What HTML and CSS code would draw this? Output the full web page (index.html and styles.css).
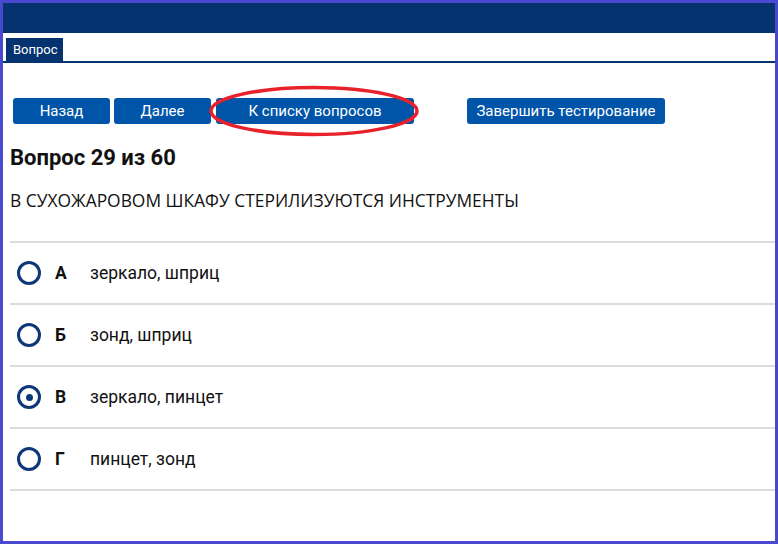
FILE: index.html
```html
<!DOCTYPE html>
<html lang="ru">
<head>
<meta charset="utf-8">
<title>Вопрос</title>
<link rel="stylesheet" href="styles.css">
</head>
<body>
<div class="frame">
  <div class="topbar"></div>
  <div class="tabs"><span class="tab">Вопрос</span></div>
  <div class="toolbar">
    <button class="btn btn-sm">Назад</button>
    <button class="btn btn-sm">Далее</button>
    <span class="marked">
      <button class="btn btn-lg">К списку вопросов</button>
      <svg class="ring" width="214" height="54" viewBox="0 0 214 54"><ellipse cx="107" cy="27" rx="103" ry="23.5" fill="none" stroke="#e8212b" stroke-width="3.5"/></svg>
    </span>
    <button class="btn btn-lg btn-finish">Завершить тестирование</button>
  </div>
  <h1 class="qtitle">Вопрос 29 из 60</h1>
  <p class="qtext">В СУХОЖАРОВОМ ШКАФУ СТЕРИЛИЗУЮТСЯ ИНСТРУМЕНТЫ</p>
  <ul class="answers">
    <li class="answer"><span class="radio"></span><span class="letter">А</span><span class="atext">зеркало, шприц</span></li>
    <li class="answer"><span class="radio"></span><span class="letter">Б</span><span class="atext">зонд, шприц</span></li>
    <li class="answer"><span class="radio checked"></span><span class="letter">В</span><span class="atext">зеркало, пинцет</span></li>
    <li class="answer"><span class="radio"></span><span class="letter">Г</span><span class="atext">пинцет, зонд</span></li>
  </ul>
</div>
</body>
</html>
```
FILE: styles.css
```css
* { box-sizing: border-box; }
html, body { margin: 0; padding: 0; background: #fff; }
body { font-family: Roboto, "Noto Sans", sans-serif; color: #111; }
.frame {
  width: 778px;
  height: 544px;
  border: 3px solid #4848d0;
  overflow: hidden;
}
.topbar { height: 30px; background: #05336f; }
.tabs {
  padding: 5px 0 0 3px;
  border-bottom: 2px solid #05336f;
  display: flex;
}
.tab {
  background: #05336f;
  color: #fff;
  font-size: 13px;
  line-height: 23px;
  padding: 0 5px 0 7px;
}
.toolbar {
  display: flex;
  align-items: center;
  margin-top: 35px;
  padding-left: 10px;
  gap: 4px;
}
.btn {
  font-family: Roboto, sans-serif;
  font-size: 15px;
  color: #fff;
  background: #0055a8;
  border: 0;
  border-radius: 3px;
  height: 26px;
  padding: 0;
}
.btn-sm { width: 97px; }
.btn-lg { width: 198px; }
.marked { position: relative; display: flex; margin-left: 1px; }
.ring { position: absolute; left: -9px; top: -14px; pointer-events: none; }
.btn-finish { margin-left: 49px; }
.qtitle {
  font-size: 22px;
  font-weight: 700;
  margin: 20px 0 0 7px;
  line-height: 28px;
}
.qtext {
  font-family: "Open Sans", sans-serif;
  font-size: 17.4px;
  margin: 16px 0 0 7px;
  line-height: 24px;
}
.answers {
  list-style: none;
  margin: 29px 0 0 7px;
  padding: 0;
  border-top: 2px solid #dcdcdc;
}
.answer {
  display: flex;
  align-items: center;
  height: 62px;
  border-bottom: 2px solid #dcdcdc;
  font-size: 17.5px;
}
.radio {
  width: 24px;
  height: 24px;
  border: 3px solid #0d3878;
  border-radius: 50%;
  margin-left: 7px;
  display: flex;
  align-items: center;
  justify-content: center;
}
.radio.checked::after {
  content: "";
  width: 7px;
  height: 7px;
  border-radius: 50%;
  background: #0d3878;
}
.letter { font-weight: 700; width: 35px; margin-left: 14px; }
.atext { }
```
